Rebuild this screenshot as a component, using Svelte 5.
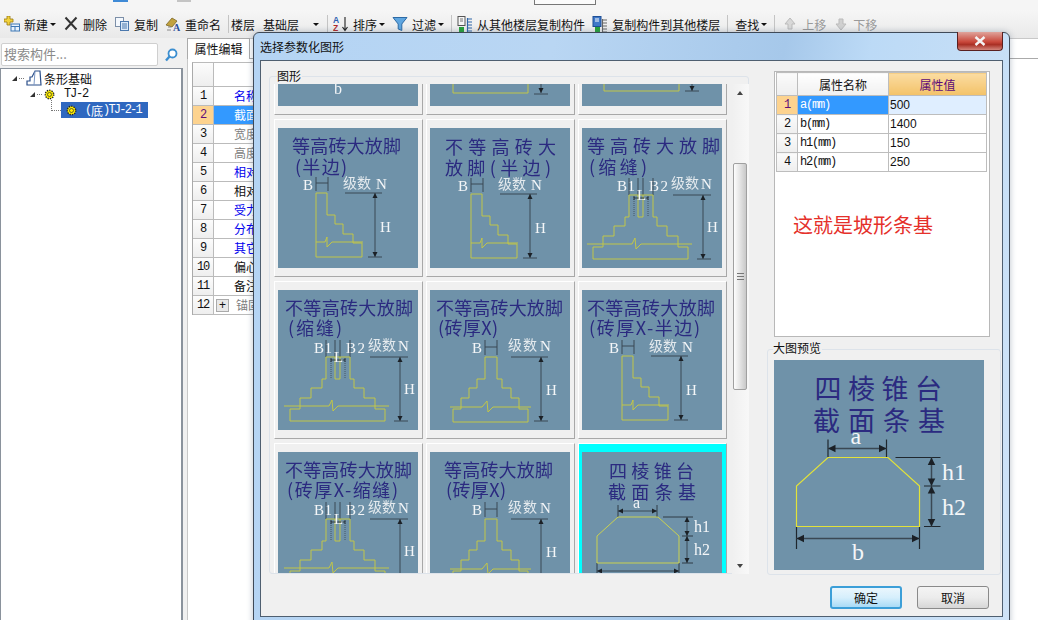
<script>
    const rows = [
        { n: 1, text: '名称', cls: 'blue' },
        { n: 2, text: '截面形状', cls: 'sel' },
        { n: 3, text: '宽度', cls: 'gray' },
        { n: 4, text: '高度', cls: 'gray' },
        { n: 5, text: '相对底标高', cls: 'blue' },
        { n: 6, text: '相对偏心距', cls: '' },
        { n: 7, text: '受力筋', cls: 'blue' },
        { n: 8, text: '分布筋', cls: 'blue' },
        { n: 9, text: '其它钢筋', cls: 'blue' },
        { n: 10, text: '偏心条基', cls: '' },
        { n: 11, text: '备注', cls: '' },
        { n: 12, text: '锚固搭接', cls: 'gray', plus: true }
    ];

    const props = [
        { n: 1, name: 'a(mm)', value: '500' },
        { n: 2, name: 'b(mm)', value: '1400' },
        { n: 3, name: 'h1(mm)', value: '150' },
        { n: 4, name: 'h2(mm)', value: '250' }
    ];

    // title text, x, width, baseline
    const tiles = [
        { kind: 'cutA' },
        { kind: 'cutB' },
        { kind: 'cutC' },
        { kind: 'half', dx: 0, t1: ['等高砖大放脚', 14, 109, 25], t2: ['(半边)', 17, 52, 46] },
        { kind: 'half', dx: 3, t1: ['不等高砖大', 15, 111, 26], t2: ['放脚(半边)', 15, 106, 47] },
        { kind: 'tee', dx: 0, t1: ['等高砖大放脚', 5, 133, 25], t2: ['(缩缝)', 7, 58, 46] },
        { kind: 'tee', dx: 1, t1: ['不等高砖大放脚', 7, 128, 25], t2: ['(缩缝)', 10, 54, 45] },
        { kind: 'thick', dx: 0, t1: ['不等高砖大放脚', 6, 127, 25], t2: ['(砖厚X)', 8, 60, 45] },
        { kind: 'half', dx: 2, t1: ['不等高砖大放脚', 5, 128, 25], t2: ['(砖厚X-半边)', 7, 111, 45] },
        { kind: 'tee', dx: 1, t1: ['不等高砖大放脚', 7, 127, 25], t2: ['(砖厚X-缩缝)', 9, 111, 45] },
        { kind: 'thick', dx: 0, t1: ['等高砖大放脚', 14, 109, 25], t2: ['(砖厚X)', 16, 60, 45] },
        { kind: 'taper', selected: true }
    ];
</script>

{#snippet arrowV(x, y1, y2)}
    <line class="dim" x1={x} y1={y1} x2={x} y2={y2} />
    <polygon class="head" points="{x - 2.5},{y1 + 5} {x},{y1} {x + 2.5},{y1 + 5}" />
    <polygon class="head" points="{x - 2.5},{y2 - 5} {x},{y2} {x + 2.5},{y2 - 5}" />
{/snippet}

{#snippet arrowH(x1, x2, y)}
    <line class="dim" x1={x1} y1={y} x2={x2} y2={y} />
    <polygon class="head" points="{x1 + 5},{y - 2.5} {x1},{y} {x1 + 5},{y + 2.5}" />
    <polygon class="head" points="{x2 - 5},{y - 2.5} {x2},{y} {x2 - 5},{y + 2.5}" />
{/snippet}

{#snippet figure(t)}
    <svg viewBox="0 0 140 140" class="fig">
        {#if t.t1}
            <text class="title" x={t.t1[1]} y={t.t1[3]} textLength={t.t1[2]}>{t.t1[0]}</text>
            <text class="title" x={t.t2[1]} y={t.t2[3]} textLength={t.t2[2]}>{t.t2[0]}</text>
        {/if}
        {#if t.kind === 'half'}
            <g transform="translate({t.dx} {t.dx > 0 ? 1 : 0})">
                <text class="lab" x="25" y="62">B</text>
                <path class="dim" d="M38 49V63M50 49V63M38 55H50" />
                <text class="cn" x="65" y="60" textLength="28">级数</text>
                <text class="lab" x="98" y="61">N</text>
                <line class="dim" x1="67" y1="65" x2="104" y2="65" />
                {@render arrowV(97, 65, 129)}
                <line class="dim" x1="90" y1="129" x2="104" y2="129" />
                <text class="lab" x="102" y="104">H</text>
                <path class="yel" d="M38 65H49V87H57V96H65V106H75V115H84V129H38Z" />
                <path class="yel" d="M38 114H47L49 109V119L54 114H85" />
            </g>
        {:else if t.kind === 'tee'}
            <g transform="translate({t.dx} 0)">
                <text class="lab" x="35" y="63" textLength="18">B1</text>
                <text class="lab" x="67" y="63" textLength="19">B2</text>
                <path class="dim" d="M47 50V67M56 50V67M61 50V67M71 50V67" />
                <path class="dash" d="M52 69V89M66 69V89" />
                <text class="cn" x="89" y="60" textLength="28">级数</text>
                <text class="lab" x="119" y="61">N</text>
                <line class="dim" x1="91" y1="67" x2="129" y2="67" />
                {@render arrowV(121, 67, 131)}
                <line class="dim" x1="115" y1="131" x2="129" y2="131" />
                <text class="lab" x="125" y="104">H</text>
                <path class="yel" d="M47 67H71V89H75V98H85V108H96V119H106V131H11V119H21V108H32V98H43V89H47Z" />
                <path class="yel" d="M56 67V89H61V67" />
                <path class="yel" d="M5 116H50L53 110L54 121L59 116H110" />
                <path class="dark" d="M52 70H66M52 68V72M66 68V72" />
                <text class="lab" x="55" y="72" font-size="13">L</text>
            </g>
        {:else if t.kind === 'thick'}
            <text class="lab" x="42" y="63">B</text>
            <path class="dim" d="M55 50V65M67 50V65M55 57H67" />
            <text class="cn" x="78" y="60" textLength="29">级数</text>
            <text class="lab" x="110" y="61">N</text>
            <line class="dim" x1="81" y1="67" x2="118" y2="67" />
            {@render arrowV(111, 67, 131)}
            <line class="dim" x1="104" y1="131" x2="118" y2="131" />
            <text class="lab" x="116" y="105">H</text>
            <path class="yel" d="M55 67H67V89H72V98H81V108H89V119H98V132H23V119H31V108H39V98H47V89H55Z" />
            <path class="yel" d="M20 117H52L57 111L58 122L63 117H101" />
        {:else if t.kind === 'taper'}
            <text class="title" x="27" y="26" textLength="85">四棱锥台</text>
            <text class="title" x="26" y="47" textLength="88">截面条基</text>
            <text class="lab big" x="51" y="56">a</text>
            <path class="dark" d="M36 53V65M75 53V65M81 65H111M100 84H111M100 111H111M15 111V126M97 111V126" />
            {@render arrowH(36, 75, 59)}
            {@render arrowV(105, 65, 84)}
            {@render arrowV(105, 84, 111)}
            {@render arrowH(15, 97, 119)}
            <path class="yel bright" d="M36 65H76L97 84V111H15V84Z" />
            <text class="lab big" x="112" y="80">h1</text>
            <text class="lab big" x="112" y="103">h2</text>
            <text class="lab big" x="52" y="133">b</text>
        {:else if t.kind === 'cutA'}
            <text class="lab big" x="56" y="128">b</text>
        {:else if t.kind === 'cutB'}
            <path class="yel" d="M23 110V127H98V110" />
            {@render arrowV(111, 100, 127)}
            <line class="dim" x1="104" y1="128" x2="118" y2="128" />
        {:else if t.kind === 'cutC'}
            <path class="yel" d="M22 110V125H97V110" />
            {@render arrowV(110, 100, 125)}
            <line class="dim" x1="103" y1="125" x2="117" y2="125" />
        {/if}
    </svg>
{/snippet}

{#snippet gear()}
    <svg class="gear" viewBox="0 0 12 12">
        <circle cx="6" cy="6" r="4.6" fill="#ffef00" stroke="#222" stroke-width="1.6" stroke-dasharray="1.4 1.2" />
        <circle cx="6" cy="6" r="2.2" fill="#ffef00" stroke="#333" stroke-width="0.8" />
    </svg>
{/snippet}

{#snippet caret()}
    <span class="caret"></span>
{/snippet}

<div class="app">
    <div class="topstrip">
        <span class="frag f1"></span>
        <span class="frag f2"></span>
        <span class="frag f3"></span>
    </div>

    <div class="toolbar">
        <div class="tool">
            <svg class="ico" viewBox="0 0 16 16">
                <path d="M3 0h3v3h3v3H6v3H3V6H0V3h3z" fill="#f2d23c" stroke="#9a7a10" stroke-width="0.8" />
                <rect x="7" y="8" width="8.5" height="7" fill="#e8f1fb" stroke="#3f78b5" />
                <path d="M7 10.5h8.5M11 10.5V15" stroke="#3f78b5" />
            </svg>
            <span>新建</span>{@render caret()}
        </div>
        <div class="tool">
            <svg class="ico" viewBox="0 0 16 16"><path d="M2.5 1.5l11 12M13.5 1.5l-11 12" stroke="#333" stroke-width="2" /></svg>
            <span>删除</span>
        </div>
        <div class="tool">
            <svg class="ico" viewBox="0 0 16 16">
                <rect x="1.5" y="1.5" width="8" height="9" fill="#f4f8fd" stroke="#7c8fa8" />
                <rect x="6.5" y="5.5" width="8" height="9" fill="#dce9f7" stroke="#4b78ad" />
                <path d="M8 8h5M8 10h5M8 12h5" stroke="#4b78ad" />
            </svg>
            <span>复制</span>
        </div>
        <div class="tool">
            <svg class="ico" viewBox="0 0 16 16">
                <path d="M1 9l6-7 5 3-5 6z" fill="#c2a23e" stroke="#6e5a1a" stroke-width="0.7" />
                <path d="M2 14h4M3 11h3" stroke="#888" />
                <text class="ico-a" x="8" y="15">A</text>
            </svg>
            <span>重命名</span>
        </div>
        <span class="sep tight"></span>
        <span class="plain">楼层</span>
        <div class="floor"><span>基础层</span>{@render caret()}</div>
        <span class="sep narrow"></span>
        <div class="tool">
            <svg class="ico" viewBox="0 0 16 16">
                <text class="ico-az blue-a" x="0" y="7">A</text>
                <text class="ico-az red-z" x="0" y="15">Z</text>
                <path d="M12 1v13M9.5 11l2.5 3.5 2.5-3.5" fill="none" stroke="#222" stroke-width="1.1" />
            </svg>
            <span>排序</span>{@render caret()}
        </div>
        <div class="tool">
            <svg class="ico" viewBox="0 0 16 16">
                <path d="M1 1.5h14L9.8 8v6.5L6.2 13V8z" fill="#5fa6e0" stroke="#2c6aa5" />
            </svg>
            <span>过滤</span>{@render caret()}
        </div>
        <span class="sep narrow"></span>
        <div class="tool">
            <svg class="ico" viewBox="0 0 16 16">
                <rect x="1" y="0.5" width="7" height="9" fill="#f6f6f6" stroke="#555" />
                <path d="M3 3h3M3 5h3" stroke="#777" />
                <rect x="2" y="11" width="5" height="5" fill="#27a23a" />
                <path d="M11 3h4M11 6h4M11 9h4M11 12h4M11 15h4M10.5 2v14" stroke="#2f66a8" stroke-width="1.2" />
            </svg>
            <span>从其他楼层复制构件</span>
        </div>
        <div class="tool">
            <svg class="ico" viewBox="0 0 16 16">
                <rect x="1" y="0.5" width="8" height="10" fill="#3f78c8" stroke="#1f4f96" />
                <path d="M3 3h4M3 5h4" stroke="#fff" />
                <rect x="3" y="11" width="5" height="5" fill="#27a23a" />
                <path d="M11 4h4M11 7h4M11 10h4M11 13h4M11 16h4M10.5 3v13" stroke="#666" stroke-width="1.1" />
            </svg>
            <span>复制构件到其他楼层</span>
        </div>
        <span class="sep"></span>
        <div class="tool"><span>查找</span>{@render caret()}</div>
        <span class="sep"></span>
        <div class="tool off">
            <svg class="ico" viewBox="0 0 16 16"><path d="M8 2l5 6h-3v5H6V8H3z" fill="#d8d8d8" stroke="#bbb" /></svg>
            <span>上移</span>
        </div>
        <div class="tool off">
            <svg class="ico" viewBox="0 0 16 16"><path d="M8 14l5-6h-3V3H6v5H3z" fill="#d0d0d0" stroke="#bbb" /></svg>
            <span>下移</span>
        </div>
    </div>

    <div class="work">
        <div class="left">
            <div class="searchrow">
                <div class="search">搜索构件...</div>
                <svg class="glass" viewBox="0 0 14 14">
                    <circle cx="8.5" cy="5.5" r="4" fill="#fff" stroke="#3b8ed0" stroke-width="1.8" />
                    <path d="M5.5 8.5L2 12.5" stroke="#3b8ed0" stroke-width="2.4" />
                </svg>
            </div>
            <div class="tree">
                <div class="node lv0">
                    <span class="tri"></span><span class="dots"></span>
                    <svg class="rooticon" viewBox="0 0 16 16">
                        <path d="M1 15v-4h3V7h2l3-6h5l1 14z" fill="#fff" stroke="#2b4f8a" stroke-width="1.2" />
                        <path d="M9 1l-1 14" stroke="#7c98c4" />
                    </svg>
                    <span class="cn-text">条形基础</span>
                </div>
                <div class="node lv1">
                    <span class="tri"></span><span class="dots"></span>
                    {@render gear()}
                    <span class="mono name">TJ-2</span>
                </div>
                <div class="node lv2">
                    <span class="elbow"></span>
                    <div class="picked">
                        {@render gear()}
                        <span class="mono paren">(</span><span class="cn-text">底</span><span class="mono tighter">)TJ-2-1</span>
                    </div>
                </div>
            </div>
        </div>

        <div class="center">
            <div class="tabs"><div class="tab">属性编辑</div></div>
            <div class="grid">
                <div class="ghead"><span class="num"></span><span class="cell"></span></div>
                {#each rows as r}
                    <div class="grow {r.cls}">
                        <span class="num mono">{r.n}</span>
                        <span class="cell">
                            {#if r.plus}<span class="plus">+</span>{/if}
                            <span class="ctext">{r.text}</span>
                        </span>
                    </div>
                {/each}
            </div>
        </div>
    </div>

    <div class="dialog">
        <div class="titlebar">
            <span>选择参数化图形</span>
            <div class="close">
                <svg viewBox="0 0 14 10"><path d="M2.5 1l9 8M11.5 1l-9 8" stroke="#f4f4f4" stroke-width="2.4" /></svg>
            </div>
        </div>
        <div class="panel">
            <div class="main">
                <div class="group shapes">
                    <span class="legend">图形</span>
                    <div class="viewport">
                        <div class="tilegrid">
                            {#each tiles as t}
                                <div class="tile" class:selected={t.selected}>
                                    {@render figure(t)}
                                </div>
                            {/each}
                        </div>
                    </div>
                    <div class="scrollbar">
                        <span class="arrow up"></span>
                        <div class="thumb"><span class="grip"></span></div>
                        <span class="arrow down"></span>
                    </div>
                </div>

                <div class="side">
                    <div class="propbox">
                        <table>
                            <thead>
                                <tr><th class="rn"></th><th class="pname">属性名称</th><th class="pval">属性值</th></tr>
                            </thead>
                            <tbody>
                                {#each props as p}
                                    <tr class:active={p.n === 1}>
                                        <td class="rn mono">{p.n}</td>
                                        <td class="pn mono">{p.name}</td>
                                        <td class="pv">{p.value}</td>
                                    </tr>
                                {/each}
                            </tbody>
                        </table>
                        <div class="note">这就是坡形条基</div>
                    </div>
                    <div class="group preview">
                        <span class="legend">大图预览</span>
                        <div class="bigfig">{@render figure({ kind: 'taper' })}</div>
                    </div>
                </div>
            </div>
            <div class="footer">
                <button class="btn primary">确定</button>
                <button class="btn">取消</button>
            </div>
        </div>
    </div>
</div>

<style>
    :global(body) {
        margin: 0;
        overflow: hidden;
    }
    .app {
        position: relative;
        width: 1038px;
        height: 620px;
        overflow: hidden;
        display: flex;
        flex-direction: column;
        background: #f0f0f0;
        font-family: "Noto Sans CJK SC", "Liberation Sans", sans-serif;
        font-size: 12px;
        color: #111;
    }
    .mono {
        font-family: "Liberation Mono", monospace;
        font-size: 12px;
        letter-spacing: -1.2px;
    }
    .tighter {
        letter-spacing: -1.8px;
    }

    .topstrip {
        height: 10px;
        background: #f5f5f5;
        display: flex;
        flex: none;
    }
    .frag {
        display: block;
    }
    .f1 {
        width: 15px;
        height: 2px;
        margin-left: 113px;
        background: #3f8ad6;
    }
    .f2 {
        width: 14px;
        height: 2px;
        margin-left: 49px;
        background: #c4c4c4;
    }
    .f3 {
        width: 60px;
        height: 4px;
        margin-left: 343px;
        background: #fbfbfb;
        border: 1px solid #777;
        border-top: none;
    }

    .toolbar {
        height: 28px;
        flex: none;
        display: flex;
        align-items: center;
        gap: 7px;
        padding-left: 4px;
        background: linear-gradient(#f6f6f6, #e9e9e9);
        white-space: nowrap;
    }
    .tool {
        display: flex;
        align-items: center;
        gap: 4px;
    }
    .tool.off {
        color: #9a9a9a;
    }
    .ico {
        width: 16px;
        height: 16px;
        flex: none;
    }
    .ico-a {
        font: bold 10px "Liberation Serif", serif;
        fill: #2b4f9a;
    }
    .ico-az {
        font: bold 8.5px "Liberation Sans", sans-serif;
    }
    .blue-a {
        fill: #2b5fb0;
    }
    .red-z {
        fill: #b02b2b;
    }
    .caret {
        width: 0;
        height: 0;
        margin-left: -2px;
        border-left: 3px solid transparent;
        border-right: 3px solid transparent;
        border-top: 3px solid #111;
    }
    .sep {
        width: 1px;
        height: 18px;
        background: #c4c4c4;
        margin-right: 0;
    }
    .sep.tight {
        margin-right: -5px;
    }
    .sep.narrow {
        margin-right: -2px;
    }
    .floor {
        display: flex;
        align-items: center;
        justify-content: space-between;
        width: 57px;
        margin-left: 1px;
    }
    .floor .caret {
        margin-right: 1px;
    }

    .work {
        flex: 1;
        display: flex;
        min-height: 0;
    }
    .left {
        width: 183px;
        flex: none;
        padding-top: 5px;
        box-sizing: border-box;
        display: flex;
        flex-direction: column;
    }
    .searchrow {
        display: flex;
        align-items: center;
        height: 23px;
        padding-left: 1px;
        gap: 6px;
    }
    .search {
        width: 157px;
        height: 23px;
        box-sizing: border-box;
        border: 1px solid #cfcfcf;
        border-radius: 2px;
        background: #fff;
        color: #8a8a8a;
        font-size: 13px;
        line-height: 20px;
        padding-left: 2px;
    }
    .glass {
        width: 14px;
        height: 14px;
    }
    .tree {
        flex: 1;
        margin-top: 2px;
        background: #fff;
        border: 1px solid #8a929c;
        border-bottom: none;
        border-right-width: 2px;
        padding-top: 1px;
    }
    .node {
        height: 16px;
        display: flex;
        align-items: center;
        white-space: nowrap;
    }
    .lv0 {
        padding-left: 11px;
    }
    .lv1 {
        padding-left: 29px;
    }
    .lv2 {
        padding-left: 50px;
    }
    .tri {
        width: 0;
        height: 0;
        border-left: 5px solid transparent;
        border-bottom: 5px solid #333;
        flex: none;
    }
    .dots {
        width: 5px;
        margin: 0 2px;
        border-top: 1px dotted #777;
    }
    .rooticon {
        width: 16px;
        height: 16px;
        margin-right: 2px;
    }
    .gear {
        width: 11px;
        height: 11px;
        flex: none;
    }
    .name {
        margin-left: 9px;
    }
    .elbow {
        width: 9px;
        height: 10px;
        margin-top: -10px;
        border-left: 1px dotted #777;
        border-bottom: 1px dotted #777;
    }
    .picked {
        width: 87px;
        height: 16px;
        background: #2f68c0;
        color: #fff;
        display: flex;
        align-items: center;
        padding-left: 5px;
        box-sizing: border-box;
    }
    .paren {
        margin-left: 8px;
    }

    .center {
        flex: 1;
        margin-left: 4px;
        background: #fff;
        border-left: 1px solid #c8c8c8;
        min-width: 0;
    }
    .tabs {
        height: 19px;
        background: #fff;
        border-top: 1px solid #c8c8c8;
        border-bottom: 1px solid #aaa;
        box-sizing: content-box;
        margin-left: -1px;
    }
    .tab {
        width: 63px;
        height: 21px;
        box-sizing: border-box;
        margin-left: 0;
        background: #fff;
        border: 1px solid #aaa;
        border-bottom: none;
        text-align: center;
        font-size: 12px;
        line-height: 19px;
        margin-top: -1px;
    }
    .grid {
        width: 640px;
        margin: 3px 0 0 4px;
        border-left: 1px solid #aaa;
        border-top: 1px solid #bbb;
    }
    .ghead {
        display: flex;
        height: 24px;
        border-bottom: 1px solid #bbb;
        box-sizing: border-box;
    }
    .grow {
        display: flex;
        height: 19px;
        box-sizing: border-box;
        border-bottom: 1px solid #bbb;
    }
    .num {
        width: 21px;
        flex: none;
        box-sizing: border-box;
        background: linear-gradient(#fcfcfc, #eeeeee);
        border-right: 1px solid #bbb;
        text-align: center;
        line-height: 18px;
    }
    .cell {
        flex: 1;
        padding-left: 2px;
        display: flex;
        align-items: center;
        line-height: 18px;
        font-size: 12px;
    }
    .ctext {
        margin-left: 18px;
    }
    .plus {
        width: 11px;
        height: 11px;
        margin-right: -11px;
        border: 1px solid #aaa;
        background: #e8e8e8;
        font: 12px/10px "Liberation Sans", sans-serif;
        text-align: center;
    }
    .blue .ctext {
        color: #0000ee;
    }
    .gray .ctext {
        color: #808080;
    }
    .sel .num {
        background: #fdd38f;
        color: #60107a;
    }
    .sel .cell {
        background: #3399ff;
        color: #fff;
    }

    .dialog {
        position: absolute;
        left: 253px;
        top: 32px;
        width: 757px;
        height: 600px;
        box-sizing: border-box;
        border: 1px solid #3f4a58;
        border-radius: 6px 6px 0 0;
        padding: 0 6px;
        background: linear-gradient(100deg, #b4d4f4 0%, #b9d6f3 35%, #a6c8ea 62%, #bcdaf6 72%, #cfe3f7 100%);
        box-shadow: 0 0 6px rgba(60, 80, 110, 0.35);
    }
    .titlebar {
        height: 27px;
        position: relative;
        display: flex;
        align-items: center;
        font-size: 12px;
    }
    .close {
        position: absolute;
        right: 0;
        top: -1px;
        width: 46px;
        height: 19px;
        box-sizing: border-box;
        border: 1px solid #5a2020;
        border-top: none;
        border-radius: 0 0 4px 4px;
        background: linear-gradient(#dfa49c, #c9473a 55%, #a93025 70%, #d3867c);
        display: flex;
        justify-content: center;
        align-items: center;
    }
    .close svg {
        width: 14px;
        height: 10px;
    }
    .panel {
        height: 557px;
        box-sizing: border-box;
        border: 1px solid #4f5f70;
        background: #f0f0f0;
        display: flex;
        flex-direction: column;
    }
    .main {
        display: flex;
        align-items: flex-start;
        gap: 18px;
        padding-left: 8px;
        height: 524px;
    }
    .group {
        position: relative;
        box-sizing: border-box;
        border: 1px solid #dde3ea;
        border-radius: 3px;
    }
    .legend {
        position: absolute;
        left: 7px;
        top: -9px;
        background: #f0f0f0;
        line-height: 16px;
        padding-right: 1px;
    }
    .shapes {
        margin-top: 15px;
        width: 480px;
        height: 498px;
        display: flex;
        padding: 7px 1px 0 1px;
    }
    .viewport {
        width: 459px;
        height: 490px;
        overflow: hidden;
        border-bottom: 1px solid #dde3ea;
        box-sizing: border-box;
        flex: none;
    }
    .tilegrid {
        display: grid;
        grid-template-columns: repeat(3, 149px);
        grid-auto-rows: 158px;
        gap: 4px 3px;
        margin-top: -127px;
        padding-left: 3px;
    }
    .tile {
        box-sizing: border-box;
        background: #f0f0f0;
        border: 1px solid;
        border-color: #fff #a8a8a8 #a8a8a8 #fff;
        padding: 8px 0 0 3px;
    }
    .tile.selected {
        background: #00ffff;
    }
    .fig {
        display: block;
        width: 100%;
        height: 100%;
        background: #6f92a9;
    }
    .tile .fig {
        width: 140px;
        height: 140px;
        filter: blur(0.25px);
    }
    .title {
        font-family: "Noto Sans CJK SC", sans-serif;
        font-size: 18px;
        fill: #2b2a80;
    }
    .lab {
        font-family: "Liberation Serif", serif;
        font-size: 15px;
        fill: #f4f6f8;
    }
    .lab.big {
        font-size: 16px;
    }
    .cn {
        font-family: "Noto Sans CJK SC", sans-serif;
        font-size: 14px;
        fill: #e4eaee;
    }
    .dim {
        stroke: #3a4854;
        stroke-width: 1;
        fill: none;
    }
    .dark {
        stroke: #1f272e;
        stroke-width: 0.8;
        fill: none;
    }
    .dash {
        stroke: #3a4854;
        stroke-width: 0.8;
        stroke-dasharray: 1 1;
        fill: none;
    }
    .head {
        fill: #1b2026;
    }
    .yel {
        stroke: #c2c648;
        stroke-width: 1;
        fill: none;
    }
    .yel.bright {
        stroke: #e2e23a;
        stroke-width: 0.8;
    }

    .scrollbar {
        width: 17px;
        margin-left: 2px;
        height: 490px;
        position: relative;
        background: linear-gradient(90deg, #f0f0f0, #f8f8f8);
        flex: none;
    }
    .arrow {
        position: absolute;
        left: 5px;
        width: 0;
        height: 0;
        border-left: 3px solid transparent;
        border-right: 3px solid transparent;
    }
    .arrow.up {
        top: 7px;
        border-bottom: 4px solid #444;
    }
    .arrow.down {
        bottom: 6px;
        border-top: 4px solid #444;
    }
    .thumb {
        position: absolute;
        left: 1px;
        top: 79px;
        width: 14px;
        height: 227px;
        box-sizing: border-box;
        border: 1px solid #a0a0a0;
        border-radius: 2px;
        background: linear-gradient(90deg, #fdfdfd, #e4e4e4 50%, #c8c8c8);
        display: flex;
        align-items: center;
        justify-content: center;
    }
    .grip {
        width: 7px;
        height: 7px;
        background: repeating-linear-gradient(#777 0 1px, transparent 1px 3px);
    }

    .side {
        display: flex;
        flex-direction: column;
    }
    .propbox {
        margin: 10px 0 0 7px;
        width: 216px;
        height: 266px;
        box-sizing: border-box;
        background: #fff;
        border: 1px solid #b8b8b8;
    }
    table {
        border-collapse: collapse;
        margin-left: 1px;
        table-layout: fixed;
        width: 211px;
    }
    th,
    td {
        border: 1px solid #bdbdbd;
        padding: 0;
        height: 19px;
        line-height: 17px;
        box-sizing: border-box;
        font-weight: normal;
    }
    th {
        height: 23px;
        font-size: 12px;
    }
    .rn {
        width: 21px;
        text-align: center;
        background: linear-gradient(#fbfbfb, #eeeeee);
    }
    .pname {
        width: 91px;
        background: linear-gradient(#fff, #f0f0f0);
    }
    .pval {
        background: linear-gradient(#fbdca2, #f3c268);
        color: #5c0a78;
    }
    .pn {
        padding-left: 2px;
    }
    .pv {
        padding-left: 1px;
        font-family: "Liberation Sans", sans-serif;
        font-size: 12px;
    }
    tr.active .rn {
        background: #fdd38f;
        color: #60107a;
    }
    tr.active .pn {
        background: #3399ff;
        color: #fff;
    }
    tr.active .pv {
        background: #dfeeff;
    }
    .note {
        margin: 39px 0 0 18px;
        font-size: 20px;
        line-height: 28px;
        color: #e5302a;
    }
    .preview {
        margin: 12px 0 0 0;
        width: 234px;
        height: 226px;
        padding: 10px 0 0 6px;
    }
    .preview .legend {
        left: 5px;
        top: -10px;
    }
    .bigfig {
        width: 210px;
        height: 210px;
    }
    .footer {
        flex: 1;
        display: flex;
        justify-content: flex-end;
        align-items: flex-start;
        gap: 15px;
        padding: 1px 13px 0 0;
    }
    .btn {
        width: 72px;
        height: 23px;
        padding: 0;
        box-sizing: border-box;
        border: 1px solid #8a8a8a;
        border-radius: 3px;
        background: linear-gradient(#f4f4f4, #ececec 50%, #d6d6d6);
        font: 12px "Noto Sans CJK SC", sans-serif;
        color: #111;
    }
    .btn.primary {
        border: 2px solid #3c9fd8;
        background: linear-gradient(#eaf6fd, #d6effc 50%, #a9dbf6);
    }
</style>
